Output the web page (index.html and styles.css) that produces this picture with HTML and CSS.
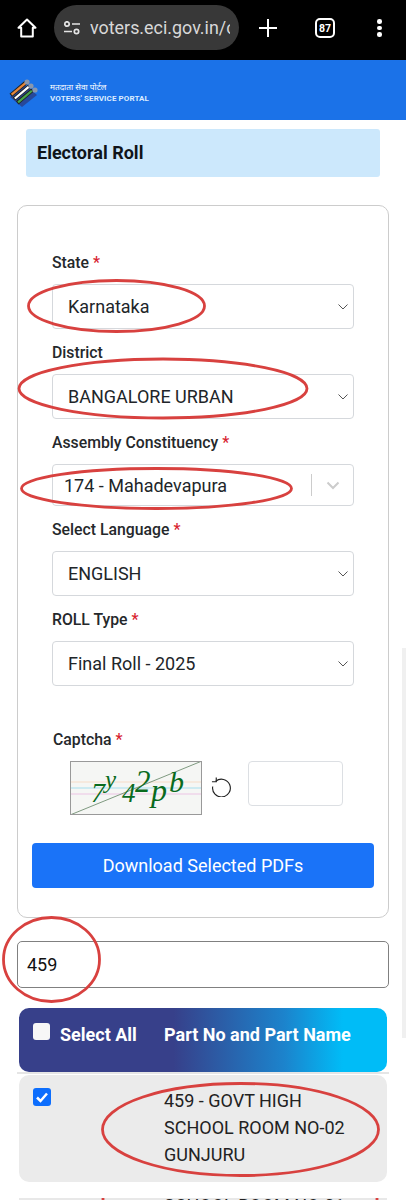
FILE: index.html
```html
<!DOCTYPE html>
<html lang="en">
<head>
<meta charset="utf-8">
<title>Electoral Roll</title>
<link rel="stylesheet" href="styles.css">
</head>
<body>
<div class="page">
  <div class="chrome">
    <svg class="ic-home" viewBox="0 0 20 20"><path d="M10 1.500 1.500 9.800h2.700V18.500h11.600V9.800h2.700z" fill="none" stroke="#fff" stroke-width="2" stroke-linejoin="round"/></svg>
    <div class="url">
      <svg class="ic-tune" viewBox="0 0 18 14"><circle cx="4" cy="3" r="2.200" fill="none" stroke="#e4e4e4" stroke-width="1.700"/><path d="M9 3h8M1 10.500h8" stroke="#e4e4e4" stroke-width="1.700"/><circle cx="13.500" cy="10.500" r="2.200" fill="none" stroke="#e4e4e4" stroke-width="1.700"/></svg>
      <span class="url-text">voters.eci.gov.in/c</span>
    </div>
    <svg class="ic-plus" viewBox="0 0 18 18"><path d="M9 0v18M0 9h18" stroke="#fff" stroke-width="2"/></svg>
    <div class="tabs">87</div>
    <div class="dots"><i></i><i></i><i></i></div>
  </div>

  <header class="brand">
    <svg class="logo" viewBox="0 0 30 30">
      <path d="M1 19 16 7l12 10-15 12z" fill="#27489a"/>
      <g transform="rotate(-40 13 15)">
        <rect x="3" y="7.500" width="20" height="4" fill="#222"/><rect x="4" y="8.500" width="18" height="2.200" fill="#e8883a"/>
        <rect x="3" y="12.500" width="20" height="4" fill="#222"/><rect x="4" y="13.500" width="18" height="2.200" fill="#fff"/>
        <rect x="3" y="17.500" width="20" height="4" fill="#222"/><rect x="4" y="18.500" width="18" height="2.200" fill="#47a64a"/>
      </g>
      <circle cx="18" cy="4" r="2.600" fill="#8a97ad"/><circle cx="22" cy="8" r="2.600" fill="#8a97ad"/><circle cx="26" cy="12" r="2.600" fill="#8a97ad"/>
    </svg>
    <div class="brand-text">
      <div class="brand-hi">मतदाता सेवा पोर्टल</div>
      <div class="brand-en">VOTERS' SERVICE PORTAL</div>
    </div>
  </header>

  <main class="content">
    <h1 class="title">Electoral Roll</h1>

    <section class="card">
      <div class="field">
        <label class="label">State <b>*</b></label>
        <div class="select"><span>Karnataka</span><svg class="chev" viewBox="0 0 10 6"><path d="M.5.5 5 5 9.500.5" fill="none" stroke="#555" stroke-width="1"/></svg></div>
      </div>
      <div class="field">
        <label class="label">District</label>
        <div class="select"><span>BANGALORE URBAN</span><svg class="chev" viewBox="0 0 10 6"><path d="M.5.5 5 5 9.500.5" fill="none" stroke="#555" stroke-width="1"/></svg></div>
      </div>
      <div class="field">
        <label class="label">Assembly Constituency <b>*</b></label>
        <div class="select combo"><span>174 - Mahadevapura</span><i class="sep"></i><svg class="chev2" viewBox="0 0 14 9"><path d="M1.500 1.500 7 7l5.500-5.500" fill="none" stroke="#ccc" stroke-width="2"/></svg></div>
      </div>
      <div class="field">
        <label class="label">Select Language <b>*</b></label>
        <div class="select"><span>ENGLISH</span><svg class="chev" viewBox="0 0 10 6"><path d="M.5.5 5 5 9.500.5" fill="none" stroke="#555" stroke-width="1"/></svg></div>
      </div>
      <div class="field">
        <label class="label">ROLL Type <b>*</b></label>
        <div class="select"><span>Final Roll - 2025</span><svg class="chev" viewBox="0 0 10 6"><path d="M.5.5 5 5 9.500.5" fill="none" stroke="#555" stroke-width="1"/></svg></div>
      </div>

      <div class="captcha">
        <label class="label cap-label">Captcha <b>*</b></label>
        <div class="cap-row">
          <svg class="cap-img" viewBox="0 0 132 54">
            <rect width="132" height="54" fill="#f5f6f4"/>
            <path d="M0 21h132" stroke="#f6dcc8"/><path d="M0 27h132" stroke="#bfe6f0" stroke-width="1.500"/><path d="M0 33h132" stroke="#ecc4e4"/>
            <path d="M0 54 132 0" stroke="#7f9a80" stroke-width="1"/>
            <g fill="#0a6b1e" font-family="Liberation Serif" font-style="italic">
              <text x="21" y="41" font-size="28">7</text><text x="35" y="27" font-size="25">y</text><text x="52" y="41" font-size="27">4</text><text x="65" y="31" font-size="31">2</text><text x="81" y="40" font-size="32">p</text><text x="99" y="31" font-size="30">b</text>
            </g>
            <rect x=".5" y=".5" width="131" height="53" fill="none" stroke="#999"/>
          </svg>
          <svg class="ic-refresh" viewBox="0 0 22 22"><path d="M5 5.500A9.300 9.300 0 1 1 1.800 11" fill="none" stroke="#222" stroke-width="1.200"/><path d="M5.500 1.500V6H1" fill="none" stroke="#222" stroke-width="1.200"/></svg>
          <div class="cap-input"></div>
        </div>
      </div>

      <button class="download">Download Selected PDFs</button>
    </section>

    <div class="search">459</div>

    <div class="thead">
      <span class="box"></span>
      <span class="th-all">Select All</span>
      <span class="th-name">Part No and Part Name</span>
    </div>
    <div class="rule"></div>
    <div class="row">
      <span class="check"><svg viewBox="0 0 18 18"><path d="M4 9.500 7.500 13 14 5.500" fill="none" stroke="#fff" stroke-width="2.500"/></svg></span>
      <span class="row-text">459 - GOVT HIGH SCHOOL ROOM NO-02 GUNJURU</span>
    </div>
    <div class="row-next">
      <span class="row-text next-text">SCHOOL ROOM NO-01</span>
    </div>
  </main>

  <div class="scrollbar"></div>

  <svg class="marks" viewBox="0 0 406 1200">
    <g fill="none" stroke="#d8413f" stroke-width="2.800">
      <ellipse cx="116.500" cy="306" rx="88" ry="25.500"/>
      <ellipse cx="163" cy="388.500" rx="144" ry="29.500"/>
      <ellipse cx="156.500" cy="488.500" rx="135" ry="20"/>
      <ellipse cx="51.500" cy="959.500" rx="48" ry="42"/>
      <ellipse cx="240.500" cy="1129.500" rx="138" ry="46"/>
      <path d="M103 1198v2M377 1198v2"/>
    </g>
  </svg>
</div>
</body>
</html>
```
FILE: styles.css
```css
* { box-sizing: border-box; }
html, body { margin: 0; padding: 0; }
body { font-family: Roboto, "Noto Sans", sans-serif; color: #212529; background: #fff; }
.page { position: relative; width: 406px; height: 1200px; overflow: hidden; background: #fff; }

.chrome { height: 60px; background: #000; display: flex; align-items: flex-start; padding-top: 5px; }
.ic-home { width: 20px; height: 20px; margin: 13px 0 0 17px; flex: none; }
.url { width: 185px; height: 45px; margin-left: 17px; background: #383838; border-radius: 23px; display: flex; align-items: center; padding-left: 9px; flex: none; overflow: hidden; }
.ic-tune { width: 18px; height: 14px; margin-right: 9px; flex: none; }
.url-text { color: #d8d8d8; font-size: 17.900px; white-space: nowrap; width: 140px; overflow: hidden; }
.ic-plus { width: 18px; height: 18px; margin: 14px 0 0 20px; flex: none; }
.tabs { width: 20px; height: 20px; margin: 13px 0 0 38px; border: 2px solid #fff; border-radius: 5px; color: #fff; font-size: 10.500px; font-weight: 700; display: flex; align-items: center; justify-content: center; flex: none; }
.dots { margin: 14px 0 0 42px; display: flex; flex-direction: column; gap: 2px; }
.dots i { display: block; width: 4.500px; height: 4.500px; border-radius: 50%; background: #fff; }

.brand { height: 60px; background: #1b72e8; display: flex; align-items: center; padding-left: 9px; }
.logo { width: 30px; height: 30px; flex: none; margin-top: 6px; }
.brand-text { margin-left: 11px; color: #fff; margin-top: 6px; }
.brand-hi { font-size: 8.300px; line-height: 12px; font-family: "Noto Sans", "Noto Sans CJK SC", sans-serif; }
.brand-en { font-size: 8px; line-height: 12px; font-weight: 700; letter-spacing: .1px; color: #dcecff; }

.content { padding: 9px 17px 0; }
.title { margin: 0 9px 28px; height: 48px; background: #cce8fc; border-radius: 3px; font-size: 18px; font-weight: 700; line-height: 48px; padding-left: 11px; color: #10151a; }

.card { height: 713px; border: 1px solid #ccc; border-radius: 10px; padding: 46px 14px 0 34px; }
.field { margin-bottom: 13px; }
.label { display: block; font-size: 15.800px; font-weight: 500; line-height: 22px; height: 22px; margin-bottom: 10px; color: #25282b; }
.label b { color: #d8232f; font-weight: 500; }
.select { height: 45px; width: 302px; border: 1px solid #d5d8dc; border-radius: 4px; display: flex; align-items: center; justify-content: space-between; padding: 0 5px 0 15px; font-size: 18px; color: #212529; }
.chev { width: 10px; height: 6px; }
.combo { height: 42px; padding: 0 7px 0 11px; justify-content: flex-start; }
.combo span { flex: 1; }
.sep { width: 1px; height: 22px; background: #ccc; margin-right: 14px; }
.chev2 { width: 14px; height: 9px; margin-right: 6px; }

.captcha { margin-top: 43px; }
.cap-label { margin: 0 0 10px 1px; }
.cap-row { display: flex; align-items: flex-start; padding-left: 18px; }
.cap-img { width: 132px; height: 54px; flex: none; }
.ic-refresh { width: 21px; height: 21px; margin: 15px 0 0 9px; flex: none; }
.cap-input { width: 95px; height: 45px; margin-left: 16px; border: 1px solid #dcdfe3; border-radius: 4px; }

.download { display: block; width: 342px; height: 45px; margin: 28px 0 0 -20px; background: #1a73f8; color: #fff; font: 400 18px Roboto, sans-serif; border: 0; border-radius: 4px; }

.search { margin-top: 23px; height: 47px; border: 1px solid #808080; border-radius: 5px; display: flex; align-items: center; padding-left: 9px; font-size: 18px; color: #111; }

.thead { margin: 20px 2px 0; height: 64px; border-radius: 10px; background: linear-gradient(90deg, #37408a 0%, #37408a 42%, #1c83cc 72%, #00bcf7 88%, #00bcf7 100%); display: flex; align-items: flex-start; color: #fff; font-size: 18px; font-weight: 700; padding: 15px 0 0 14px; }
.box { width: 17px; height: 17px; background: #f7f7f7; border-radius: 3px; flex: none; }
.th-all { margin-left: 10px; line-height: 24px; width: 104px; flex: none; }
.th-name { line-height: 24px; white-space: nowrap; }
.rule { height: 2px; background: #e5e5e5; }
.row { margin: 1px 2px 0; height: 107px; background: #ebebeb; border-radius: 10px; padding: 12px 0 0 14px; display: flex; align-items: flex-start; }
.check { width: 18px; height: 18px; background: #0d6efd; border-radius: 3px; flex: none; display: block; margin-top: 1px; }
.check svg { display: block; }
.row-text { display: block; width: 200px; margin-left: 113px; font-size: 18px; line-height: 27px; color: #222; }
.row-next { display: flow-root; margin: 16px 2px 0; background: #e8e8e8; height: 30px; padding-left: 32px; }
.next-text { margin-top: -6px; white-space: nowrap; }

.scrollbar { position: absolute; right: 0; top: 648px; width: 4px; height: 390px; background: #f0f0f0; }
.marks { position: absolute; left: 0; top: 0; width: 406px; height: 1200px; pointer-events: none; }
```
